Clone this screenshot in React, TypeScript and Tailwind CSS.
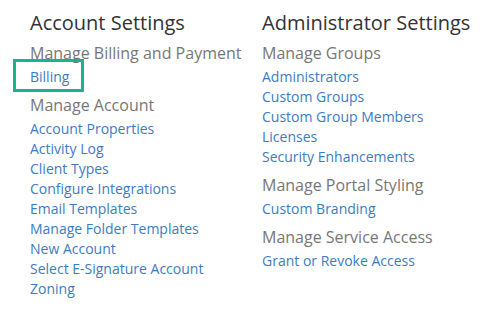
const leftSections = [
  { heading: "Manage Billing and Payment", links: ["Billing"] },
  {
    heading: "Manage Account",
    links: [
      "Account Properties",
      "Activity Log",
      "Client Types",
      "Configure Integrations",
      "Email Templates",
      "Manage Folder Templates",
      "New Account",
      "Select E-Signature Account",
      "Zoning",
    ],
  },
];

const rightSections = [
  {
    heading: "Manage Groups",
    links: ["Administrators", "Custom Groups", "Custom Group Members", "Licenses", "Security Enhancements"],
  },
  { heading: "Manage Portal Styling", links: ["Custom Branding"] },
  { heading: "Manage Service Access", links: ["Grant or Revoke Access"] },
];

type Section = { heading: string; links: string[] };

const SettingsColumn = ({ title, sections, className }: { title: string; sections: Section[]; className?: string }) => (
  <div className={className}>
    <h2 className="text-[20px] leading-[28px] text-[#333333]">{title}</h2>
    {sections.map((section, i) => (
      <div key={section.heading}>
        <h3 className={`text-[16px] leading-6 text-[#777777] mb-[2px] ${i === 0 ? "mt-[4px]" : "mt-[6px]"}`}>
          {section.heading}
        </h3>
        <ul>
          {section.links.map((link) => (
            <li key={link} className="text-[14px] leading-5">
              <a href="#" className="relative text-[#3b7cc4]">
                {link}
                {/* highlight box round the Billing link */}
                {link === "Billing" && (
                  <span className="absolute left-[-17px] top-[-8px] w-[71px] h-[33px] border-[3px] border-[#19b38f]" />
                )}
              </a>
            </li>
          ))}
        </ul>
      </div>
    ))}
  </div>
);

export default function App() {
  return (
    <div className="min-h-screen bg-white pt-[9px] pl-[30px] flex" style={{ fontFamily: '"Open Sans", sans-serif' }}>
      <SettingsColumn title="Account Settings" sections={leftSections} className="w-[232px]" />
      <SettingsColumn title="Administrator Settings" sections={rightSections} />
    </div>
  );
}
